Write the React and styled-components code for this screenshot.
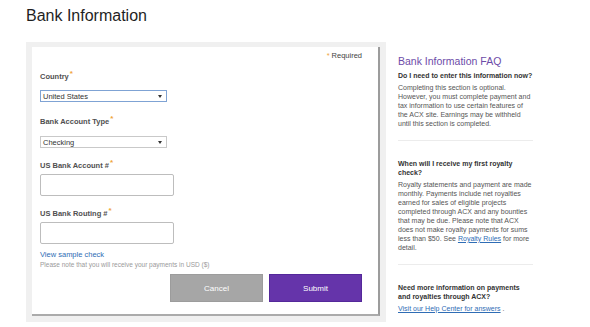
import React from "react";
import styled, { createGlobalStyle } from "styled-components";

const Global = createGlobalStyle`
  html, body { margin: 0; padding: 0; background: #fff; }
  body { font-family: "Liberation Sans", Arial, Helvetica, sans-serif; }
  * { box-sizing: border-box; }
`;

const Page = styled.div`
  padding: 6px 0 0 26px;
`;

const Title = styled.h1`
  margin: 0 0 16px;
  font-size: 16px;
  line-height: 20px;
  font-weight: normal;
  color: #1f1f1f;
`;

const Row = styled.div`
  display: flex;
  align-items: flex-start;
  gap: 12px;
`;

const Panel = styled.div`
  width: 360px;
  background: #f0f0f0;
  padding: 5px 6px 6px 6px;
`;

const Card = styled.form`
  background: #fff;
  border-right: 2px solid #9c9c9c;
  border-bottom: 2px solid #ababab;
  padding: 4px 16px 12px 8px;
  display: flex;
  flex-direction: column;
`;

const RequiredNote = styled.div`
  align-self: flex-end;
  font-size: 7.5px;
  line-height: 10px;
  color: #444;
`;

const Star = styled.span`
  color: #f0a43a;
  font-size: 8px;
  font-weight: bold;
  vertical-align: super;
  line-height: 0;
  margin-left: 1px;
`;

const PlainStar = styled.span`
  color: #f0a43a;
  margin-right: 2px;
`;

const Field = styled.div`
  display: flex;
  flex-direction: column;
  align-items: flex-start;
  margin-top: ${(p) => p.$top}px;
`;

const Label = styled.label`
  font-size: 7.5px;
  line-height: 10px;
  font-weight: bold;
  color: #505050;
  margin-bottom: ${(p) => p.$gap}px;
`;

const SelectBox = styled.div`
  width: 127px;
  height: 12px;
  border: 1px solid ${(p) => (p.$focus ? "#7fa3d4" : "#c9c9c9")};
  background: #fff;
  display: flex;
  align-items: center;
  justify-content: space-between;
  padding: 0 4px 0 2px;
  font-size: 7.5px;
  color: #333;
`;

const Caret = styled.span`
  width: 0;
  height: 0;
  border-left: 2px solid transparent;
  border-right: 2px solid transparent;
  border-top: 3px solid #333;
`;

const TextInput = styled.input`
  width: 134px;
  height: 22px;
  border: 1px solid #bdbdbd;
  border-radius: 2px;
  background: #fff;
  padding: 0 4px;
  font-size: 8px;
  outline: none;
`;

const SampleLink = styled.a`
  margin-top: 6px;
  font-size: 7.5px;
  line-height: 10px;
  color: #2f6db5;
  text-decoration: none;
  align-self: flex-start;
`;

const Note = styled.div`
  font-size: 6.5px;
  line-height: 9px;
  color: #9a9a9a;
`;

const Buttons = styled.div`
  margin-top: 5px;
  display: flex;
  justify-content: flex-end;
  gap: 6px;
`;

const Button = styled.button`
  width: 93px;
  height: 28px;
  border: 1px solid ${(p) => (p.$primary ? "#54289a" : "#9c9c9c")};
  background: ${(p) => (p.$primary ? "#6534aa" : "#a6a6a6")};
  color: #fff;
  font-family: inherit;
  font-size: 8px;
  padding: 0;
  cursor: pointer;
`;

const Aside = styled.aside`
  width: 135px;
  margin-top: 12.5px;
`;

const FaqTitle = styled.h2`
  margin: 0 0 3px;
  font-size: 10.5px;
  line-height: 13px;
  font-weight: normal;
  color: #6d4ca8;
`;

const Section = styled.section`
  margin-top: ${(p) => p.$top || 0}px;
  padding-bottom: ${(p) => (p.$last ? 0 : 12)}px;
  border-bottom: ${(p) => (p.$last ? "none" : "1px solid #ececec")};
`;

const Question = styled.h3`
  margin: 0;
  font-size: 7px;
  line-height: 9px;
  font-weight: bold;
  color: #333;
`;

const Answer = styled.p`
  margin: 3px 0 0;
  font-size: 7px;
  line-height: 9px;
  color: #555;
`;

const Link = styled.a`
  color: #2f6db5;
  text-decoration: underline;
`;

export default function App() {
  return (
    <>
      <Global />
      <Page>
        <Title>Bank Information</Title>
        <Row>
          <Panel>
            <Card onSubmit={(e) => e.preventDefault()}>
              <RequiredNote>
                <PlainStar>*</PlainStar>Required
              </RequiredNote>

              <Field $top={11}>
                <Label $gap={8}>
                  Country<Star>*</Star>
                </Label>
                <SelectBox $focus>
                  <span>United States</span>
                  <Caret />
                </SelectBox>
              </Field>

              <Field $top={15}>
                <Label $gap={9}>
                  Bank Account Type<Star>*</Star>
                </Label>
                <SelectBox>
                  <span>Checking</span>
                  <Caret />
                </SelectBox>
              </Field>

              <Field $top={13}>
                <Label $gap={3}>
                  US Bank Account #<Star>*</Star>
                </Label>
                <TextInput type="text" />
              </Field>

              <Field $top={13}>
                <Label $gap={3}>
                  US Bank Routing #<Star>*</Star>
                </Label>
                <TextInput type="text" />
              </Field>

              <SampleLink href="#">View sample check</SampleLink>
              <Note>Please note that you will receive your payments in USD ($)</Note>

              <Buttons>
                <Button type="button">Cancel</Button>
                <Button type="submit" $primary>
                  Submit
                </Button>
              </Buttons>
            </Card>
          </Panel>

          <Aside>
            <FaqTitle>Bank Information FAQ</FaqTitle>
            <Section>
              <Question>Do I need to enter this information now?</Question>
              <Answer>
                Completing this section is optional. However, you must complete payment and tax
                information to use certain features of the ACX site. Earnings may be withheld until
                this section is completed.
              </Answer>
            </Section>
            <Section $top={18}>
              <Question>When will I receive my first royalty check?</Question>
              <Answer>
                Royalty statements and payment are made monthly. Payments include net royalties
                earned for sales of eligible projects completed through ACX and any bounties that
                may be due. Please note that ACX does not make royalty payments for sums less than
                $50. See <Link href="#">Royalty Rules</Link> for more detail.
              </Answer>
            </Section>
            <Section $top={18} $last>
              <Question>Need more information on payments and royalties through ACX?</Question>
              <Answer>
                <Link href="#">Visit our Help Center for answers</Link> .
              </Answer>
            </Section>
          </Aside>
        </Row>
      </Page>
    </>
  );
}
